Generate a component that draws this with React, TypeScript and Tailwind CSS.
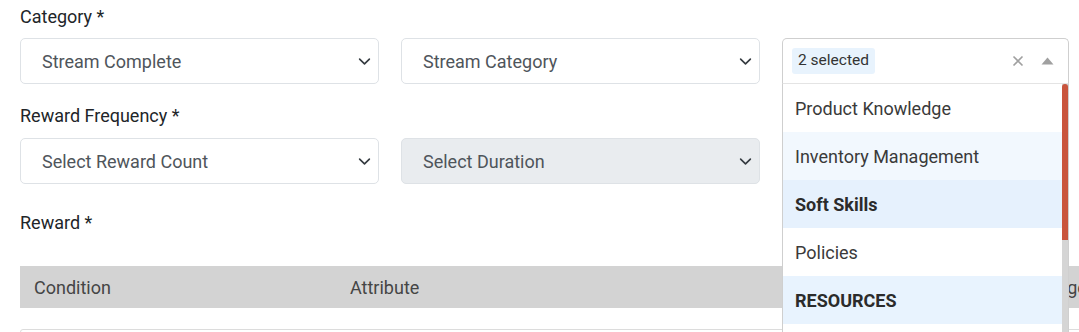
import React from 'react';

const Chevron = () => (
  <svg className="w-[13px] h-[13px]" viewBox="0 0 16 16" fill="none">
    <path d="M2 5l6 6 6-6" stroke="#343a40" strokeWidth={2} strokeLinecap="round" strokeLinejoin="round" />
  </svg>
);

const FakeSelect = ({ label, disabled }: { label: string; disabled?: boolean }) => (
  <div
    className={`flex items-center justify-between h-[46px] pl-[21px] pr-[7px] border border-[#dee2e6] rounded-[5px] text-[18px] text-[#4f555b] ${
      disabled ? 'bg-[#e9ecef]' : 'bg-white'
    }`}
  >
    <span>{label}</span>
    <Chevron />
  </div>
);

const menuItems = [
  { text: 'Product Knowledge', bg: 'bg-white', bold: false },
  { text: 'Inventory Management', bg: 'bg-[#f2f8fe]', bold: false },
  { text: 'Soft Skills', bg: 'bg-[#e6f1fd]', bold: true },
  { text: 'Policies', bg: 'bg-white', bold: false },
  { text: 'RESOURCES', bg: 'bg-[#e8f3fe]', bold: true },
  { text: 'Training', bg: 'bg-white', bold: false },
];

const MultiSelect = () => (
  <div className="relative z-10">
    <div className="flex items-center justify-between h-[46px] pl-[9px] pr-[14px] border border-[#cfcfcf] border-b-[#e4e4e4] rounded-t-[5px] bg-white">
      <span className="px-[6px] h-[26px] flex items-center rounded-[3px] bg-[#e8f3fd] text-[15.5px] text-[#333]">2 selected</span>
      <div className="flex items-center gap-[17px]">
        <svg className="w-[12px] h-[12px]" viewBox="0 0 12 12">
          <path d="M1.5 1.5l9 9M10.5 1.5l-9 9" stroke="#a0a0a0" strokeWidth={1.6} />
        </svg>
        <svg className="w-[13px] h-[8px]" viewBox="0 0 13 8">
          <path d="M6.5 0.5L12.5 7.5H0.5Z" fill="#a0a0a0" />
        </svg>
      </div>
    </div>
    {/* dropdown menu */}
    <div className="absolute left-0 right-0 top-full flex border-x border-[#cfcfcf] bg-white">
      <div className="flex-1">
        {menuItems.map((item) => (
          <div
            key={item.text}
            className={`h-[48px] flex items-center pl-[12px] text-[18px] ${item.bg} ${
              item.bold ? 'font-bold text-[#2b2b2b]' : 'text-[#3a3a3a]'
            }`}
          >
            {item.text}
          </div>
        ))}
      </div>
      <div className="w-[6px] bg-[#d5d5d5]">
        <div className="h-[156px] bg-[#c9553d] rounded-t-[3px]" />
      </div>
    </div>
  </div>
);

const App = () => {
  return (
    <div className="relative w-[1079px] h-[332px] overflow-hidden bg-white pl-5 pt-[5px] font-['Roboto',sans-serif]">
      <div className="text-[18px] leading-6 text-[#212529] mb-[9px]">Category *</div>
      <div className="grid grid-cols-[359px_359px_287px] gap-x-[22px]">
        <FakeSelect label="Stream Complete" />
        <FakeSelect label="Stream Category" />
        <MultiSelect />
      </div>

      <div className="text-[18px] leading-6 text-[#212529] mt-[20px] mb-[10px]">Reward Frequency *</div>
      <div className="grid grid-cols-[359px_359px] gap-x-[22px]">
        <FakeSelect label="Select Reward Count" />
        <FakeSelect label="Select Duration" disabled />
      </div>

      <div className="text-[18px] leading-6 text-[#212529] mt-[27px]">Reward *</div>

      <div className="mt-[31px] w-[1200px]">
        <div className="flex h-[42px] items-center bg-[#d3d3d3] text-[18px] text-[#454545]">
          <div className="w-[330px] pl-[14px]">Condition</div>
          <div className="w-[686px]">Attribute</div>
          <div>Badge</div>
        </div>
        <div className="mt-[21px] h-[40px] border border-[#dcdcdc] rounded-[3px]" />
      </div>
    </div>
  );
};

export default App;
